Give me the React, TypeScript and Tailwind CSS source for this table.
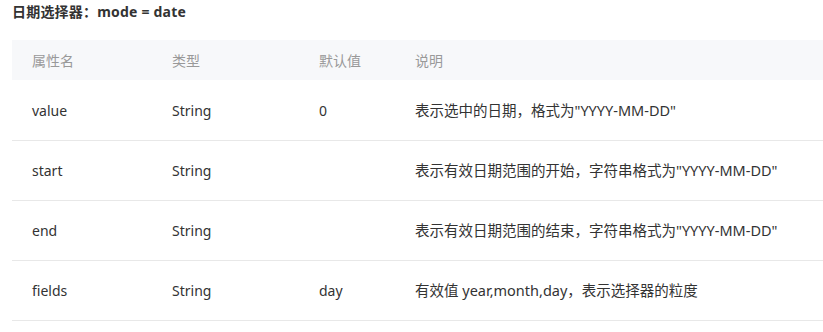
import React from "react";

type Row = {
  name: string;
  type: string;
  def: string;
  desc: string;
};

const rows: Row[] = [
  { name: "value", type: "String", def: "0", desc: "表示选中的日期，格式为\"YYYY-MM-DD\"" },
  { name: "start", type: "String", def: "", desc: "表示有效日期范围的开始，字符串格式为\"YYYY-MM-DD\"" },
  { name: "end", type: "String", def: "", desc: "表示有效日期范围的结束，字符串格式为\"YYYY-MM-DD\"" },
  { name: "fields", type: "String", def: "day", desc: "有效值 year,month,day，表示选择器的粒度" },
];

const App = () => {
  return (
    <div
      className="w-[823px] h-[332px] bg-white overflow-hidden text-[14px] text-[#333]"
      style={{ fontFamily: '"Noto Sans", "Noto Sans CJK SC", sans-serif' }}
    >
      <h3 className="pl-3 pt-[1px] h-10 font-bold text-[14px] leading-[22px] text-[#333] tracking-[0.2px]">
        日期选择器：mode = date
      </h3>
      <div className="ml-3">
        <div className="flex h-10 items-center bg-[#f7f8fa] text-[#999]">
          <div className="w-[140px] pl-5">属性名</div>
          <div className="w-[147px] pl-5">类型</div>
          <div className="w-[96px] pl-5">默认值</div>
          <div className="flex-1 pl-5">说明</div>
        </div>
        <div className="mt-px">
          {rows.map((r) => (
            <div key={r.name} className="flex h-[60px] items-center border-b border-[#e8e8e8]">
              <div className="w-[140px] pl-5">{r.name}</div>
              <div className="w-[147px] pl-5">{r.type}</div>
              <div className="w-[96px] pl-5">{r.def}</div>
              <div className="flex-1 pl-5 whitespace-nowrap text-[14.5px]">{r.desc}</div>
            </div>
          ))}
        </div>
      </div>
    </div>
  );
};

export default App;
